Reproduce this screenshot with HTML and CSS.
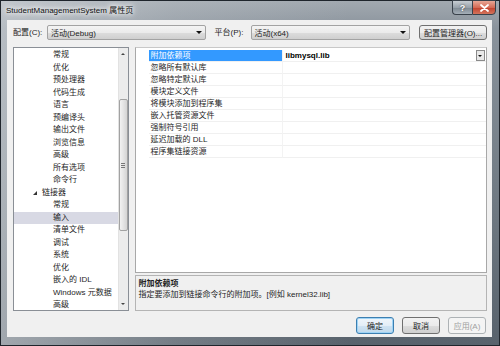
FILE: index.html
```html
<!DOCTYPE html>
<html lang="zh-CN">
<head>
    <meta charset="UTF-8">
    <title>StudentManagementSystem 属性页</title>
    <link rel="stylesheet" href="styles.css">
</head>
<body>
    <div class="window">
        <div class="titlebar">
            <span class="title">StudentManagementSystem 属性页</span>
            <div class="caption-btns">
                <span class="cap-help">?</span>
                <span class="cap-close">
                    <svg width="9" height="8" viewBox="0 0 9 8"><path d="M1 1 L8 7 M8 1 L1 7" stroke="#fff" stroke-width="1.8" stroke-linecap="round"/></svg>
                </span>
            </div>
        </div>

        <div class="client">
            <div class="config-row">
                <label class="lbl lbl-config">配置(C):</label>
                <div class="combo combo-config"><span>活动(Debug)</span><i class="arrow"></i></div>
                <label class="lbl lbl-platform">平台(P):</label>
                <div class="combo combo-platform"><span>活动(x64)</span><i class="arrow"></i></div>
                <button class="btn btn-manager">配置管理器(O)...</button>
            </div>

            <div class="main">
                <!-- 左侧属性树 -->
                <div class="tree">
                    <ul class="tree-list">
                        <li class="child">常规</li>
                        <li class="child">优化</li>
                        <li class="child">预处理器</li>
                        <li class="child">代码生成</li>
                        <li class="child">语言</li>
                        <li class="child">预编译头</li>
                        <li class="child">输出文件</li>
                        <li class="child">浏览信息</li>
                        <li class="child">高级</li>
                        <li class="child">所有选项</li>
                        <li class="child">命令行</li>
                        <li class="parent"><i class="expander"></i>链接器</li>
                        <li class="child">常规</li>
                        <li class="child selected">输入</li>
                        <li class="child">清单文件</li>
                        <li class="child">调试</li>
                        <li class="child">系统</li>
                        <li class="child">优化</li>
                        <li class="child">嵌入的 IDL</li>
                        <li class="child">Windows 元数据</li>
                        <li class="child">高级</li>
                    </ul>
                    <div class="vscroll">
                        <i class="sb-up"></i>
                        <div class="sb-thumb"><span class="grip"></span></div>
                        <i class="sb-down"></i>
                    </div>
                </div>

                <!-- 右侧属性表 -->
                <div class="right">
                    <div class="grid">
                        <div class="row">
                            <span class="gutter"></span>
                            <span class="name selected">附加依赖项</span>
                            <span class="value bold">libmysql.lib<i class="cell-drop"></i></span>
                        </div>
                        <div class="row"><span class="gutter"></span><span class="name">忽略所有默认库</span><span class="value"></span></div>
                        <div class="row"><span class="gutter"></span><span class="name">忽略特定默认库</span><span class="value"></span></div>
                        <div class="row"><span class="gutter"></span><span class="name">模块定义文件</span><span class="value"></span></div>
                        <div class="row"><span class="gutter"></span><span class="name">将模块添加到程序集</span><span class="value"></span></div>
                        <div class="row"><span class="gutter"></span><span class="name">嵌入托管资源文件</span><span class="value"></span></div>
                        <div class="row"><span class="gutter"></span><span class="name">强制符号引用</span><span class="value"></span></div>
                        <div class="row"><span class="gutter"></span><span class="name">延迟加载的 DLL</span><span class="value"></span></div>
                        <div class="row"><span class="gutter"></span><span class="name">程序集链接资源</span><span class="value"></span></div>
                    </div>
                    <div class="desc">
                        <p class="desc-title">附加依赖项</p>
                        <p class="desc-text">指定要添加到链接命令行的附加项。[例如 kernel32.lib]</p>
                    </div>
                </div>
            </div>

            <div class="buttons">
                <button class="btn btn-default">确定</button>
                <button class="btn">取消</button>
                <button class="btn btn-disabled">应用(A)</button>
            </div>
        </div>
    </div>
</body>
</html>
```

FILE: styles.css
```css
* {
    box-sizing: border-box;
}

body {
    margin: 0;
    width: 500px;
    height: 346px;
    overflow: hidden;
    font-family: "Liberation Sans", "Noto Sans CJK SC", sans-serif;
    font-size: 8px;
    color: #1e1e1e;
    background: #3a424b;
}

.window {
    width: 500px;
    height: 346px;
    padding: 0 7px 8px 6px;
    border: 1px solid #1f252c;
    background:
        linear-gradient(90deg, rgba(220, 224, 228, 0.55) 0%, rgba(200, 205, 210, 0.25) 35%, rgba(60, 70, 80, 0) 70%),
        linear-gradient(180deg, #a2a9b0 0%, #8a939c 8%, #6f7982 60%, #58626c 100%);
    display: flex;
    flex-direction: column;
}

/* 标题栏 */
.titlebar {
    height: 19px;
    display: flex;
    align-items: flex-start;
}

.title {
    margin-top: 5px;
    margin-left: -1px;
    font-size: 8px;
    line-height: 10px;
    color: #111;
    text-shadow: 0 0 4px #fff, 0 0 6px #fff, 0 0 8px rgba(255, 255, 255, 0.9);
}

.caption-btns {
    margin-left: auto;
    margin-top: -1px;
    margin-right: -4px;
    display: flex;
}

.cap-help,
.cap-close {
    height: 15px;
    display: flex;
    align-items: center;
    justify-content: center;
    border: 1px solid #39414a;
}

.cap-help {
    width: 20px;
    border-radius: 0 0 0 4px;
    border-right: none;
    color: #fff;
    font-size: 9px;
    font-weight: bold;
    text-shadow: 0 0 2px #333;
    background: linear-gradient(180deg, #c7cdd3 0%, #98a2ab 50%, #7c8791 51%, #a5afb8 100%);
}

.cap-close {
    width: 24px;
    border-radius: 0 0 4px 0;
    background: linear-gradient(180deg, #e8a796 0%, #d46a55 50%, #c2412d 51%, #d3745c 100%);
}

/* 客户区 */
.client {
    flex: 1;
    background: #f0f0f0;
    padding: 5px 5px 0 6px;
    display: flex;
    flex-direction: column;
}

.config-row {
    height: 15px;
    display: flex;
    align-items: center;
}

.lbl {
    line-height: 15px;
}

.lbl-config {
    width: 34px;
}

.lbl-platform {
    width: 36px;
    margin-left: 9px;
}

.combo {
    height: 15px;
    display: flex;
    align-items: center;
    padding-left: 3px;
    border: 1px solid #a3a3a3;
    border-radius: 2px;
    background: linear-gradient(180deg, #f4f4f4 0%, #ebebeb 50%, #dddddd 51%, #cfcfcf 100%);
}

.combo-config {
    width: 159px;
}

.combo-platform {
    width: 160px;
}

.arrow {
    margin-left: auto;
    margin-right: 3px;
    width: 0;
    height: 0;
    border-left: 3px solid transparent;
    border-right: 3px solid transparent;
    border-top: 3px solid #111;
}

.btn {
    height: 15px;
    padding: 0;
    font-family: inherit;
    font-size: 8px;
    color: #1e1e1e;
    border: 1px solid #707070;
    border-radius: 3px;
    background: linear-gradient(180deg, #f2f2f2 0%, #ebebeb 50%, #dddddd 51%, #cfcfcf 100%);
}

.btn-manager {
    width: 68px;
    margin-left: 9px;
}

/* 主区域 */
.main {
    margin-top: 7px;
    height: 264px;
    display: flex;
    gap: 6px;
}

.tree {
    width: 116px;
    border: 1px solid #8a8f96;
    background: #fff;
    display: flex;
}

.tree-list {
    flex: 1;
    margin: 0;
    padding: 1px 0 0 0;
    list-style: none;
    overflow: hidden;
}

.tree-list li {
    height: 12.5px;
    line-height: 12.5px;
    white-space: nowrap;
    display: flex;
    align-items: center;
}

.tree-list .child {
    padding-left: 39px;
}

.tree-list .parent {
    padding-left: 19px;
}

.tree-list .selected {
    background: #d8d9e4;
}

.expander {
    width: 0;
    height: 0;
    margin-right: 5px;
    border-left: 4px solid transparent;
    border-bottom: 4px solid #333;
}

.vscroll {
    width: 10px;
    background: #ececec;
    border-left: 1px solid #e2e2e2;
    display: flex;
    flex-direction: column;
    align-items: center;
}

.sb-up,
.sb-down {
    width: 0;
    height: 0;
    border-left: 2px solid transparent;
    border-right: 2px solid transparent;
}

.sb-up {
    margin-top: 5px;
    border-bottom: 2px solid #444;
}

.sb-down {
    margin-top: auto;
    margin-bottom: 5px;
    border-top: 2px solid #444;
}

.sb-thumb {
    margin-top: 44px;
    width: 9px;
    height: 132px;
    border: 1px solid #a2a2a2;
    border-radius: 2px;
    background: linear-gradient(90deg, #f2f2f2 0%, #e4e4e4 50%, #d4d4d4 100%);
    display: flex;
    align-items: center;
    justify-content: center;
}

.grip {
    width: 4px;
    height: 5px;
    border-top: 1px solid #777;
    border-bottom: 1px solid #777;
    background: linear-gradient(180deg, transparent 1px, #777 1px, #777 2px, transparent 2px);
}

/* 属性表 */
.right {
    width: 354px;
    display: flex;
    flex-direction: column;
    gap: 2px;
}

.grid {
    height: 226px;
    border: 1px solid #a8a8a8;
    border-top-color: #c8c8c8;
    background: #fff;
    padding-top: 2px;
}

.row {
    height: 12px;
    display: flex;
}

.gutter {
    width: 13px;
}

.name {
    width: 134px;
    padding-left: 2px;
    line-height: 12px;
    white-space: nowrap;
    border-bottom: 1px solid #f0f0f0;
    border-right: 1px solid #f3f3f3;
}

.name.selected {
    background: #3399ff;
    color: #fff;
}

.value {
    flex: 1;
    padding-left: 3px;
    line-height: 12px;
    border-bottom: 1px solid #f0f0f0;
    display: flex;
    align-items: center;
}

.bold {
    font-weight: bold;
    color: #000;
}

.cell-drop {
    margin-left: auto;
    margin-right: 1px;
    width: 9px;
    height: 11px;
    border: 1px solid #8a8a8a;
    background:
        linear-gradient(135deg, transparent 45%, transparent 55%),
        #e8e8e8;
    position: relative;
}

.cell-drop::after {
    content: "";
    position: absolute;
    left: 1px;
    top: 4px;
    border-left: 2.5px solid transparent;
    border-right: 2.5px solid transparent;
    border-top: 2.5px solid #111;
}

.desc {
    height: 36px;
    border: 1px solid #b4b4b4;
    background: #f0f0f0;
    padding: 2px 3px;
}

.desc p {
    margin: 0;
    line-height: 11px;
}

.desc-title {
    font-weight: bold;
}

/* 底部按钮 */
.buttons {
    margin-top: 6px;
    display: flex;
    justify-content: flex-end;
    gap: 8px;
    padding-right: 1px;
}

.buttons .btn {
    width: 38px;
    height: 17px;
}

.btn-default {
    border-color: #3c7fb1;
    box-shadow: inset 0 0 0 1px #9fd3f5;
    background: linear-gradient(180deg, #f0f6fb 0%, #e3eef7 50%, #cfe3f2 51%, #c0d9ec 100%);
}

.btn-disabled {
    color: #a0a0a0;
    border-color: #adb2b5;
    background: #f4f4f4;
}
```
